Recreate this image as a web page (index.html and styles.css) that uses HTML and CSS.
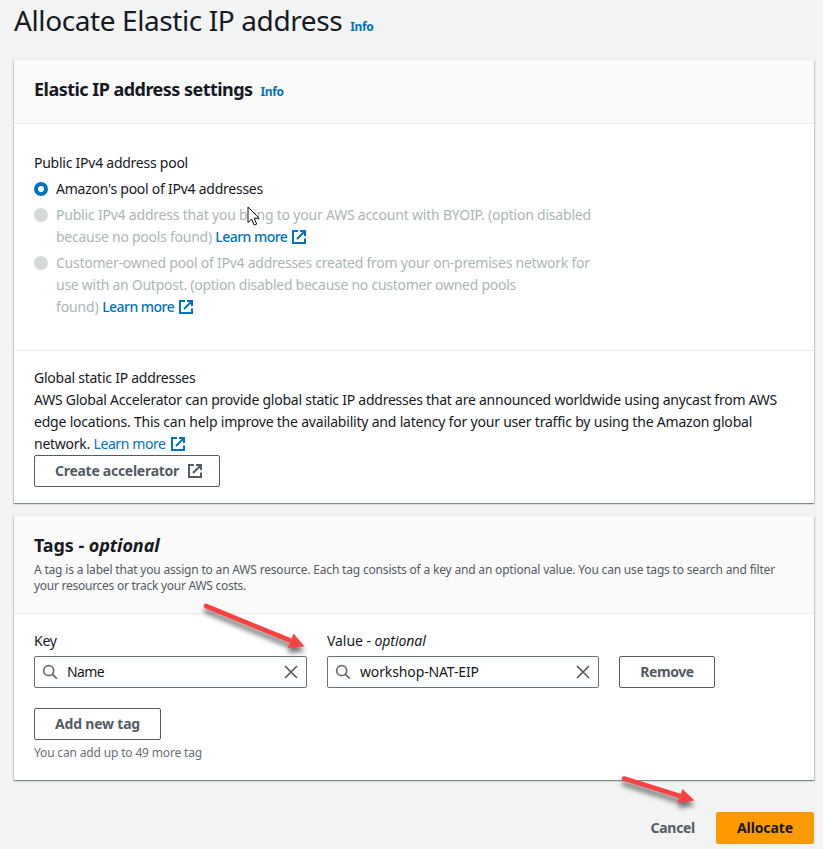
FILE: index.html
```
<!DOCTYPE html>
<html lang="en">
<head>
<meta charset="utf-8">
<title>Allocate Elastic IP address</title>
<link rel="stylesheet" href="styles.css">
</head>
<body>
<svg class="defs" width="0" height="0">
  <symbol id="ext" viewBox="0 0 16 16"><path d="M7 2H2v12h12V9.500M9 2h5v5M14 2 6 10" fill="none" stroke="currentColor" stroke-width="2"/></symbol>
  <symbol id="search" viewBox="0 0 16 16"><circle cx="6.700" cy="6.700" r="5" fill="none" stroke="#687078" stroke-width="1.800"/><path d="m10.300 10.300 4.600 4.300" stroke="#687078" stroke-width="1.900"/></symbol>
  <symbol id="close" viewBox="0 0 16 16"><path d="m2 2 12 12M14 2 2 14" stroke="#545b64" stroke-width="1.700"/></symbol>
</svg>
<main class="page">
  <header class="title"><h1>Allocate Elastic IP address</h1><a class="info">Info</a></header>

  <section class="card">
    <header class="card-head head-settings"><h2 class="t-settings">Elastic IP address settings</h2><a class="info">Info</a></header>
    <div class="pool">
      <div class="pool-label">Public IPv4 address pool</div>
      <div class="option"><i class="radio on"></i><div>Amazon's pool of IPv4 addresses</div></div>
      <div class="option off"><i class="radio"></i><div>
        <div class="l1">Public IPv4 address that you bring to your AWS account with BYOIP. (option disabled</div>
        <div>because no pools found) <a class="link strong">Learn more</a><svg class="ext"><use href="#ext"/></svg></div>
      </div></div>
      <div class="option off"><i class="radio"></i><div>
        <div>Customer-owned pool of IPv4 addresses created from your on-premises network for</div>
        <div class="l2">use with an Outpost. (option disabled because no customer owned pools</div>
        <div class="l4">found) <a class="link strong">Learn more</a><svg class="ext"><use href="#ext"/></svg></div>
      </div></div>
    </div>
    <div class="global">
      <div>Global static IP addresses</div>
      <div class="l3">AWS Global Accelerator can provide global static IP addresses that are announced worldwide using anycast from AWS</div>
      <div class="l1">edge locations. This can help improve the availability and latency for your user traffic by using the Amazon global</div>
      <div>network. <a class="link">Learn more</a><svg class="ext"><use href="#ext"/></svg></div>
      <button class="btn create">Create accelerator<svg class="ext"><use href="#ext"/></svg></button>
    </div>
  </section>

  <section class="card tags">
    <header class="card-head head-tags">
      <h2 class="t-tags">Tags - <em>optional</em></h2>
      <p class="d1">A tag is a label that you assign to an AWS resource. Each tag consists of a key and an optional value. You can use tags to search and filter</p>
      <p class="d2">your resources or track your AWS costs.</p>
    </header>
    <div class="tag-body">
      <div class="row">
        <div class="field key"><div>Key</div><div class="input"><svg><use href="#search"/></svg><span class="name">Name</span><svg><use href="#close"/></svg></div></div>
        <div class="field value"><div class="value-label">Value - <em>optional</em></div><div class="input"><svg><use href="#search"/></svg><span class="ws">workshop-NAT-EIP</span><svg><use href="#close"/></svg></div></div>
        <button class="btn remove">Remove</button>
      </div>
      <button class="btn add">Add new tag</button>
      <div class="hint">You can add up to 49 more tag</div>
    </div>
  </section>

  <footer class="actions"><a class="cancel">Cancel</a><button class="btn primary">Allocate</button></footer>
</main>

<svg class="arrow arrow-a" width="130" height="70"><path d="M7 11 L90 45" stroke="#fd4040" stroke-width="4.600" stroke-linecap="round"/><path d="M94.500 38.500 L105.500 51.500 L89 53Z" fill="#fd4040" class="head-a"/></svg>
<svg class="arrow arrow-b" width="100" height="60"><path d="M7 10.500 L63 28" stroke="#fd4040" stroke-width="4.600" stroke-linecap="round"/><path d="M65.500 21 L77.500 32.500 L61 35Z" fill="#fd4040"/></svg>
<svg class="cursor" width="13" height="21"><path d="M1 1v15.600l3.600-3.500 2.600 6 2.500-1-2.600-5.900h5Z" fill="#fff" stroke="#111" stroke-width="1"/></svg>
</body>
</html>
```
FILE: styles.css
```
* { box-sizing: border-box; }
body { margin: 0; height: 849px; overflow: hidden; background: #f2f3f3; color: #16191f; font: 14px/22px "Noto Sans", "Open Sans", sans-serif; letter-spacing: -.25px; white-space: nowrap; }
h1, h2, p { margin: 0; }
.defs { position: absolute; }
.page { padding: 0 9px 0 14px; }
.title { display: flex; align-items: baseline; gap: 8px; height: 60px; padding-top: 2px; }
h1 { font-size: 28px; line-height: 36px; font-weight: 400; letter-spacing: -.4px; }
.info { color: #0073bb; font-size: 12px; font-weight: 700; letter-spacing: -.4px; }
.card { width: 800px; height: 443px; background: #fff; box-shadow: 0 1px 1px rgba(0,28,36,.3), 1px 1px 1px rgba(0,28,36,.15), -1px 1px 1px rgba(0,28,36,.15), 0 -1px 0 #eaeded; }
.card-head { background: #fafafa; border-bottom: 1px solid #eaeded; padding: 0 20px; }
.head-settings { display: flex; align-items: baseline; gap: 8px; height: 64px; padding-top: 18px; }
h2 { font-size: 18px; line-height: 22px; font-weight: 700; }
.t-settings { letter-spacing: -.53px; }
.t-tags { letter-spacing: -.08px; }
.pool { height: 227px; padding: 28px 20px 0; border-bottom: 1px solid #eaeded; }
.option { display: flex; margin-top: 4px; }
.off { color: #aab7b8; }
.radio { flex: none; width: 14px; height: 14px; margin: 4px 8px 0 0; border-radius: 50%; background: #d5dbdb; }
.radio.on { background: #fff; border: 4.500px solid #0073bb; }
.link { color: #0073bb; letter-spacing: -.4px; }
.link.strong { font-weight: 500; letter-spacing: -.53px; }
.ext { width: 16px; height: 16px; margin-left: 4px; vertical-align: -3px; color: #0073bb; }
.l1 { letter-spacing: -.204px; }
.l2 { letter-spacing: -.266px; }
.l3 { letter-spacing: -.24px; }
.l4 { letter-spacing: -.13px; }
.global { padding: 16px 20px 0; }
.btn { display: flex; align-items: center; justify-content: center; height: 32px; padding: 0; border: 1px solid #545b64; border-radius: 2px; background: #fff; color: #545b64; font: 700 14px/22px "Noto Sans", sans-serif; letter-spacing: -.2px; }
.create { width: 186px; justify-content: flex-start; padding-left: 20px; letter-spacing: -.275px; }
.create .ext { color: #545b64; margin-left: 8px; }
.tags { height: 264px; margin-top: 13px; }
.head-tags { height: 98px; padding-top: 18px; }
.head-tags p { color: #545b64; font-size: 12px; line-height: 16px; }
.head-tags h2 { margin-bottom: 6px; }
.d1 { letter-spacing: -.182px; }
.d2 { letter-spacing: -.264px; }
.tag-body { padding: 16px 20px 0; }
.row { display: flex; gap: 20px; align-items: flex-end; }
.key { width: 273px; }
.value { width: 272px; }
.value-label { letter-spacing: -.06px; }
.input { display: flex; align-items: center; height: 32px; margin-top: 4px; padding: 0 7px; border: 1px solid #687078; border-radius: 2px; }
.input svg { width: 16px; height: 16px; flex: none; }
.input span { flex: 1; margin-left: 9px; }
.name { letter-spacing: -.6px; }
.ws { letter-spacing: -.13px; }
.remove { width: 96px; letter-spacing: -.45px; }
.add { width: 127px; margin-top: 20px; }
.hint { margin-top: 5px; color: #687078; font-size: 12px; line-height: 16px; letter-spacing: -.16px; }
.actions { display: flex; justify-content: flex-end; align-items: center; gap: 21px; margin-top: 32px; }
.cancel { color: #545b64; font-weight: 700; letter-spacing: -.3px; }
.primary { width: 98px; border-color: #ff9900; background: #ff9900; color: #16191f; letter-spacing: -.1px; }
.arrow { position: absolute; overflow: visible; filter: drop-shadow(0 5px 2.500px rgba(0,0,0,.55)); }
.arrow-a { left: 199px; top: 595px; }
.arrow-b { left: 617px; top: 768px; }
.cursor { position: absolute; left: 247px; top: 206px; }
```
